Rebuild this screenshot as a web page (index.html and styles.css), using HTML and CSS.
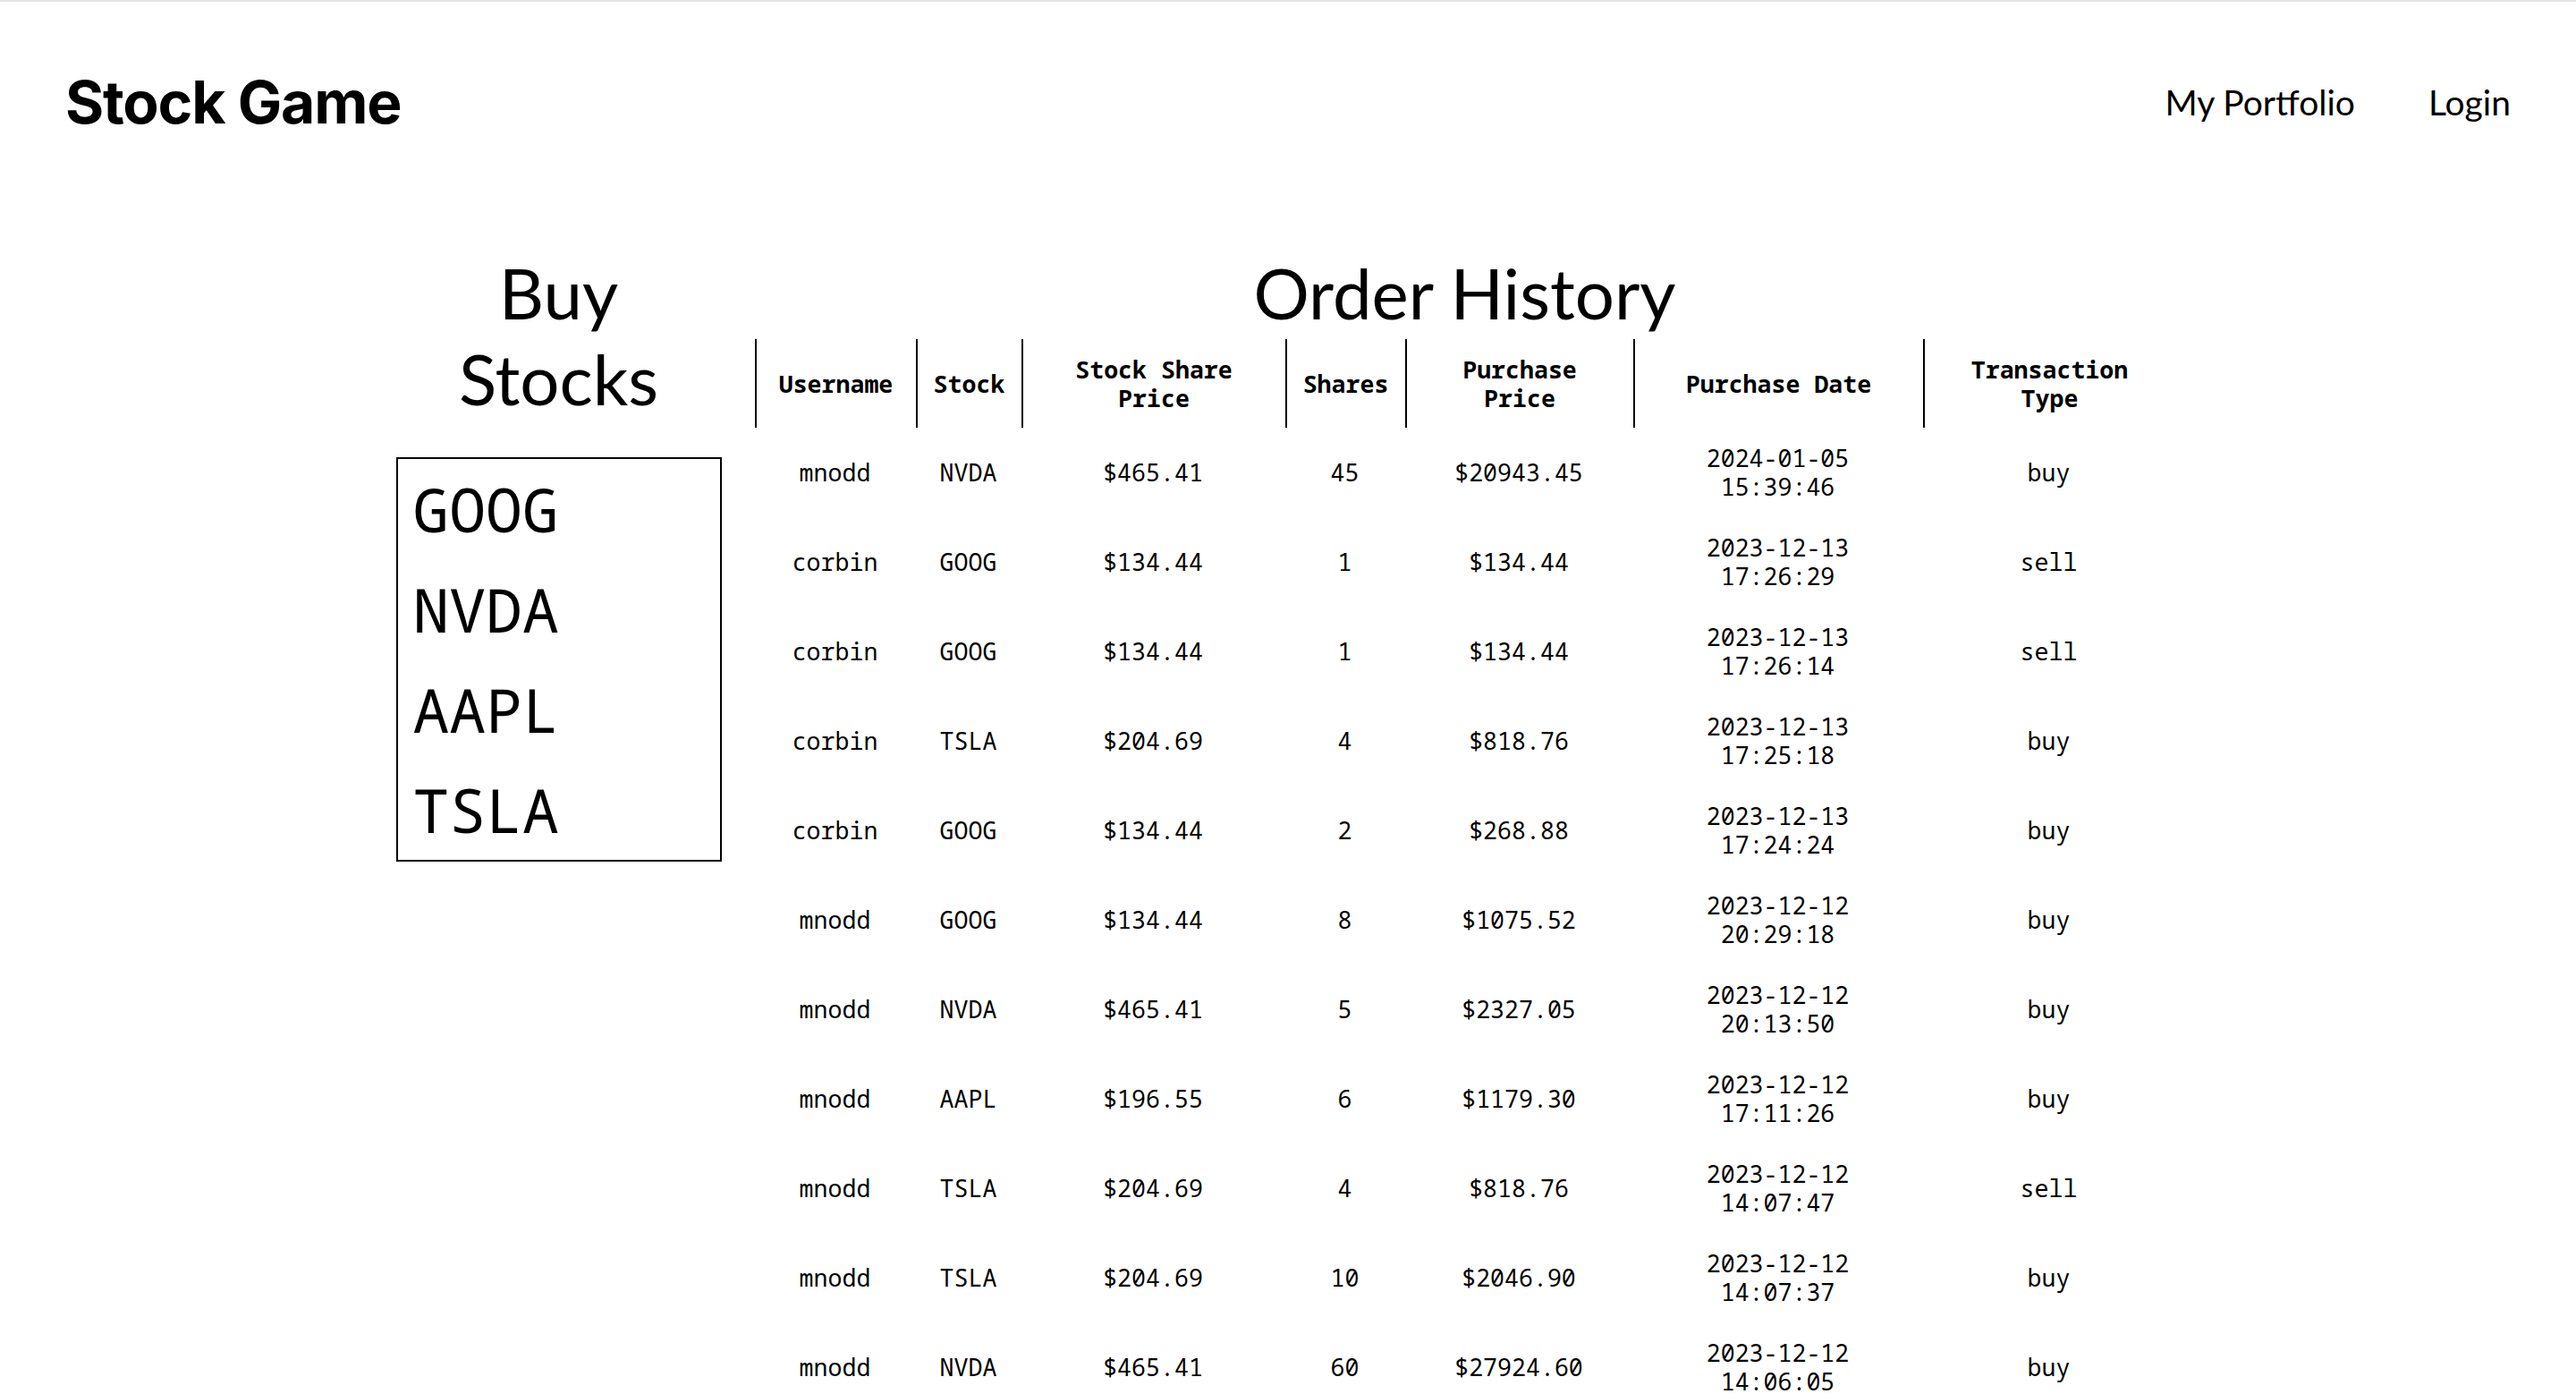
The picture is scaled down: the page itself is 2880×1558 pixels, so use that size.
FILE: index.html
```html
<!DOCTYPE html>
<html lang="en">
<head>
<meta charset="utf-8">
<title>Stock Game</title>
<link rel="stylesheet" href="styles.css">
</head>
<body>
<div class="page">
  <header class="topbar">
    <div class="brand">Stock Game</div>
    <nav class="nav">
      <a class="nav-link" href="#">My Portfolio</a>
      <a class="nav-link" href="#">Login</a>
    </nav>
  </header>
  <main class="main">
    <section class="buy">
      <h2 class="section-title">Buy<br>Stocks</h2>
      <div class="ticker-list">
        <div class="ticker">GOOG</div>
        <div class="ticker">NVDA</div>
        <div class="ticker">AAPL</div>
        <div class="ticker">TSLA</div>
      </div>
    </section>
    <section class="history">
      <h2 class="section-title history-title">Order History</h2>
      <table class="orders">
        <colgroup>
          <col class="c-user"><col class="c-stock"><col class="c-price"><col class="c-shares"><col class="c-total"><col class="c-date"><col class="c-type">
        </colgroup>
        <thead>
          <tr>
            <th>Username</th>
            <th>Stock</th>
            <th>Stock Share<br>Price</th>
            <th>Shares</th>
            <th>Purchase<br>Price</th>
            <th>Purchase Date</th>
            <th>Transaction<br>Type</th>
          </tr>
        </thead>
        <tbody>
          <tr><td>mnodd</td><td>NVDA</td><td>$465.41</td><td>45</td><td>$20943.45</td><td>2024-01-05<br>15:39:46</td><td>buy</td></tr>
          <tr><td>corbin</td><td>GOOG</td><td>$134.44</td><td>1</td><td>$134.44</td><td>2023-12-13<br>17:26:29</td><td>sell</td></tr>
          <tr><td>corbin</td><td>GOOG</td><td>$134.44</td><td>1</td><td>$134.44</td><td>2023-12-13<br>17:26:14</td><td>sell</td></tr>
          <tr><td>corbin</td><td>TSLA</td><td>$204.69</td><td>4</td><td>$818.76</td><td>2023-12-13<br>17:25:18</td><td>buy</td></tr>
          <tr><td>corbin</td><td>GOOG</td><td>$134.44</td><td>2</td><td>$268.88</td><td>2023-12-13<br>17:24:24</td><td>buy</td></tr>
          <tr><td>mnodd</td><td>GOOG</td><td>$134.44</td><td>8</td><td>$1075.52</td><td>2023-12-12<br>20:29:18</td><td>buy</td></tr>
          <tr><td>mnodd</td><td>NVDA</td><td>$465.41</td><td>5</td><td>$2327.05</td><td>2023-12-12<br>20:13:50</td><td>buy</td></tr>
          <tr><td>mnodd</td><td>AAPL</td><td>$196.55</td><td>6</td><td>$1179.30</td><td>2023-12-12<br>17:11:26</td><td>buy</td></tr>
          <tr><td>mnodd</td><td>TSLA</td><td>$204.69</td><td>4</td><td>$818.76</td><td>2023-12-12<br>14:07:47</td><td>sell</td></tr>
          <tr><td>mnodd</td><td>TSLA</td><td>$204.69</td><td>10</td><td>$2046.90</td><td>2023-12-12<br>14:07:37</td><td>buy</td></tr>
          <tr><td>mnodd</td><td>NVDA</td><td>$465.41</td><td>60</td><td>$27924.60</td><td>2023-12-12<br>14:06:05</td><td>buy</td></tr>
        </tbody>
      </table>
    </section>
  </main>
</div>
</body>
</html>
```

FILE: styles.css
```css
html, body {
  margin: 0;
  padding: 0;
  background: #ffffff;
  color: #000000;
}

body {
  overflow: hidden;
  font-family: "Lato", "Noto Sans", sans-serif;
}

.page {
  border-top: 2px solid #e3e3e3;
  height: 1556px;
  overflow: hidden;
}

.topbar {
  height: 224px;
  padding: 0 73px;
  display: flex;
  align-items: center;
  justify-content: space-between;
}

.brand {
  font-family: "Inter", "Lato", sans-serif;
  font-weight: 700;
  font-size: 66px;
  letter-spacing: -1.2px;
  line-height: 1;
}

.nav {
  display: flex;
  gap: 82px;
  align-items: center;
}

.nav-link {
  font-family: "Lato", sans-serif;
  font-size: 39px;
  color: #000;
  text-decoration: none;
  line-height: 1;
}

.main {
  margin-top: 53px;
  padding-right: 6px;
  display: flex;
  justify-content: center;
  align-items: flex-start;
  gap: 37px;
}

.section-title {
  margin: 0;
  padding-bottom: 4px;
  font-family: "Lato", sans-serif;
  font-weight: 400;
  font-size: 78px;
  line-height: 96px;
  text-align: center;
}

.buy {
  width: 364px;
  display: flex;
  flex-direction: column;
}

.ticker-list {
  margin-top: 36px;
  border: 2px solid #000;
  padding-left: 17px;
}

.ticker {
  font-family: "Noto Sans Mono", "DejaVu Sans Mono", monospace;
  font-size: 68px;
  line-height: 112px;
  height: 112px;
}

.history {
  width: 1588px;
}

.orders {
  width: 1588px;
  table-layout: fixed;
  border-collapse: separate;
  border-spacing: 0;
  font-family: "Noto Sans Mono", "DejaVu Sans Mono", monospace;
  font-size: 26.6px;
  line-height: 32px;
}

.c-user { width: 180px; }
.c-stock { width: 118px; }
.c-price { width: 295px; }
.c-shares { width: 134px; }
.c-total { width: 255px; }
.c-date { width: 324px; }
.c-type { width: 282px; }

.orders th {
  height: 99px;
  padding: 0;
  border-left: 2px solid #000;
  font-weight: 700;
  text-align: center;
  vertical-align: middle;
  box-sizing: border-box;
}

.orders td {
  height: 100px;
  padding: 0;
  font-weight: 400;
  text-align: center;
  vertical-align: middle;
}
```
